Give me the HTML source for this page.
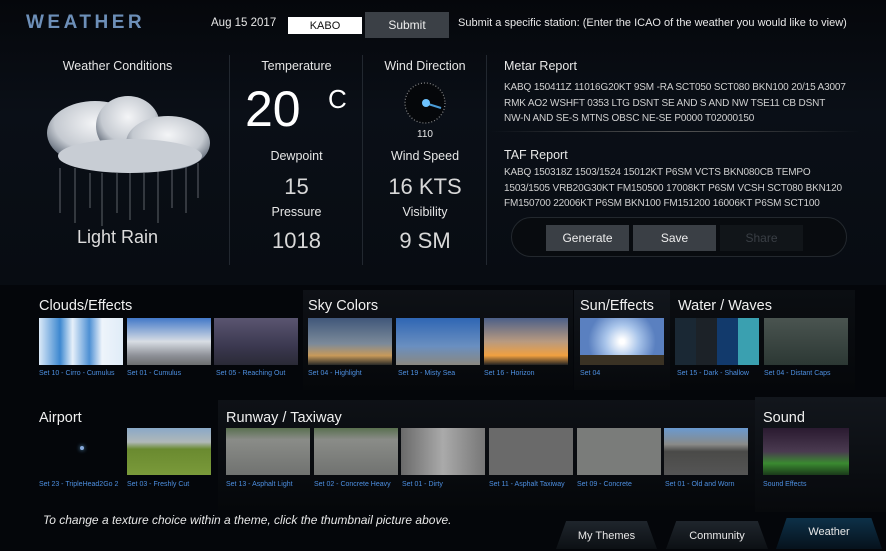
<!DOCTYPE html>
<html><head><meta charset="utf-8"><style>
*{margin:0;padding:0;box-sizing:border-box}
body{width:886px;height:547px;overflow:hidden;background:#04060a;font-family:"Liberation Sans",sans-serif;color:#e8e8e8;position:relative}
.a{position:absolute}
.top{left:0;top:0;width:886px;height:285px;background:linear-gradient(180deg,#05070b 0%,#0a0f17 40%,#080c12 100%)}
.lbl{font-size:12.5px;color:#e6e6e6;text-align:center}
.big{font-size:22px;color:#d8d8d8;text-align:center}
.mono{font-size:10px;color:#d0d0d0;line-height:15.5px;letter-spacing:-0.15px}
.h{font-size:14.5px;color:#f0f0f0}
.t{height:47px;width:84px}
.c{font-size:7px;color:#4d8fe0;white-space:nowrap}
.btn{background:#3a3f45;color:#eee;font-size:12px;text-align:center;line-height:26px;height:26px}
.tab{height:28px;color:#e8e8e8;font-size:11px;text-align:center;line-height:30px;background:linear-gradient(#1f252c,#0c1014);clip-path:polygon(10% 0,90% 0,100% 100%,0 100%)}
</style></head><body>
<div class="a top"></div>
<div class="a" style="left:26px;top:12px;font-size:19px;letter-spacing:3.5px;color:#6d8fb8;font-weight:bold">WEATHER</div>
<div class="a" style="left:211px;top:17px;font-size:11.5px">Aug 15 2017</div>
<div class="a" style="left:288px;top:17px;width:74px;height:17px;background:#fff;color:#111;font-size:11px;text-align:center;line-height:18px">KABO</div>
<div class="a btn" style="left:365px;top:12px;width:84px;height:26px;background:#3b4046">Submit</div>
<div class="a" style="left:458px;top:17px;font-size:11px">Submit a specific station: (Enter the ICAO of the weather you would like to view)</div>

<div class="a lbl" style="left:40px;top:59px;width:155px">Weather Conditions</div>
<svg class="a" style="left:40px;top:88px" width="175" height="140">
<defs><radialGradient id="g" cx="50%" cy="35%" r="60%"><stop offset="0" stop-color="#f4f5f7"/><stop offset="0.7" stop-color="#c4c9d0"/><stop offset="1" stop-color="#6a7380"/></radialGradient></defs>
<g stroke="#8a8f96" stroke-width="1.2" opacity=".55">
<line x1="20" y1="80" x2="20" y2="125"/><line x1="35" y1="80" x2="35" y2="135"/><line x1="50" y1="85" x2="50" y2="120"/><line x1="62" y1="85" x2="62" y2="138"/><line x1="77" y1="85" x2="77" y2="125"/><line x1="90" y1="85" x2="90" y2="132"/><line x1="104" y1="85" x2="104" y2="122"/><line x1="118" y1="80" x2="118" y2="135"/><line x1="132" y1="80" x2="132" y2="120"/><line x1="146" y1="75" x2="146" y2="125"/><line x1="158" y1="75" x2="158" y2="110"/></g>
<ellipse cx="55" cy="45" rx="48" ry="32" fill="url(#g)"/><ellipse cx="88" cy="38" rx="32" ry="30" fill="url(#g)"/><ellipse cx="128" cy="55" rx="42" ry="27" fill="url(#g)"/><ellipse cx="90" cy="68" rx="72" ry="17" fill="#c8cdd4"/>
</svg>
<div class="a" style="left:40px;top:227px;width:155px;font-size:18px;text-align:center;color:#ddd">Light Rain</div>

<div class="a" style="left:229px;top:55px;width:1px;height:210px;background:#222830"></div>
<div class="a" style="left:362px;top:55px;width:1px;height:210px;background:#222830"></div>
<div class="a" style="left:486px;top:55px;width:1px;height:210px;background:#222830"></div>

<div class="a lbl" style="left:230px;top:59px;width:133px">Temperature</div>
<div class="a" style="left:245px;top:80px;font-size:50px;color:#fff">20</div>
<div class="a" style="left:328px;top:84px;font-size:26px;color:#fff">C</div>
<div class="a lbl" style="left:230px;top:149px;width:133px">Dewpoint</div>
<div class="a big" style="left:230px;top:174px;width:133px">15</div>
<div class="a lbl" style="left:230px;top:205px;width:133px">Pressure</div>
<div class="a big" style="left:230px;top:228px;width:133px">1018</div>

<div class="a lbl" style="left:363px;top:59px;width:124px">Wind Direction</div>
<svg class="a" style="left:403px;top:81px" width="44" height="44"><circle cx="22" cy="22" r="20" fill="#05070a" stroke="#888" stroke-width="1.2" stroke-dasharray="1 2"/><line x1="22" y1="22" x2="38" y2="27" stroke="#4a9cd8" stroke-width="2"/><circle cx="23" cy="22" r="4" fill="#6ec3ff"/></svg>
<div class="a" style="left:363px;top:129px;width:124px;text-align:center;font-size:10px">110</div>
<div class="a lbl" style="left:363px;top:149px;width:124px">Wind Speed</div>
<div class="a big" style="left:363px;top:174px;width:124px">16 KTS</div>
<div class="a lbl" style="left:363px;top:205px;width:124px">Visibility</div>
<div class="a big" style="left:363px;top:228px;width:124px">9 SM</div>

<div class="a" style="left:504px;top:59px;font-size:12.5px">Metar Report</div>
<div class="a mono" style="left:504px;top:80px;width:360px">KABQ 150411Z 11016G20KT 9SM -RA SCT050 SCT080 BKN100 20/15 A3007<br>RMK AO2 WSHFT 0353 LTG DSNT SE AND S AND NW TSE11 CB DSNT<br>NW-N AND SE-S MTNS OBSC NE-SE P0000 T02000150</div>
<div class="a" style="left:490px;top:131px;width:370px;height:1px;background:linear-gradient(90deg,transparent,#555,transparent)"></div>
<div class="a" style="left:504px;top:148px;font-size:12.5px">TAF Report</div>
<div class="a mono" style="left:504px;top:165px;width:360px">KABQ 150318Z 1503/1524 15012KT P6SM VCTS BKN080CB TEMPO<br>1503/1505 VRB20G30KT FM150500 17008KT P6SM VCSH SCT080 BKN120<br>FM150700 22006KT P6SM BKN100 FM151200 16006KT P6SM SCT100</div>
<div class="a" style="left:511px;top:217px;width:336px;height:40px;border-radius:20px;background:#080b0f;border:1px solid #23282e"></div>
<div class="a btn" style="left:546px;top:225px;width:83px">Generate</div>
<div class="a btn" style="left:633px;top:225px;width:83px">Save</div>
<div class="a btn" style="left:720px;top:225px;width:83px;background:#111519;color:#3a3f45">Share</div>

<div class="a" style="left:303px;top:290px;width:270px;height:100px;background:linear-gradient(#0e1116,#05070a)"></div>
<div class="a" style="left:574px;top:290px;width:96px;height:100px;background:linear-gradient(#12161c,#07090c)"></div>
<div class="a" style="left:670px;top:290px;width:185px;height:100px;background:linear-gradient(#0b0e12,#05070a)"></div>
<div class="a" style="left:218px;top:400px;width:540px;height:110px;background:linear-gradient(#0e1116,#05070a)"></div>
<div class="a" style="left:755px;top:397px;width:131px;height:115px;background:linear-gradient(#12161c,#07090c)"></div>

<div class="a h" style="left:39px;top:298px">Clouds/Effects</div>
<div class="a h" style="left:308px;top:298px">Sky Colors</div>
<div class="a h" style="left:580px;top:298px">Sun/Effects</div>
<div class="a h" style="left:678px;top:298px">Water / Waves</div>
<div class="a h" style="left:39px;top:410px">Airport</div>
<div class="a h" style="left:226px;top:410px">Runway / Taxiway</div>
<div class="a h" style="left:763px;top:410px">Sound</div>

<div class="a t" style="left:39px;top:318px;background:linear-gradient(90deg,#dbe9f8,#3d88d0 25%,#e6f0fa 40%,#4d90d4 60%,#eef4fb 75%,#e0ecf8)"></div>
<div class="a t" style="left:127px;top:318px;background:linear-gradient(#4278c8,#d8dde4 50%,#8d9097 80%,#6c6e70)"></div>
<div class="a t" style="left:214px;top:318px;background:linear-gradient(#5a5570,#3b3850 60%,#2a2a36)"></div>
<div class="a t" style="left:308px;top:318px;background:linear-gradient(#40577a,#7c8a9a 55%,#c89a5a 80%,#2a2a28)"></div>
<div class="a t" style="left:396px;top:318px;background:linear-gradient(#2f66b4,#6a8fc0 60%,#8a8880)"></div>
<div class="a t" style="left:484px;top:318px;background:linear-gradient(#4b5f88,#b89a80 50%,#f0a040 80%,#222)"></div>
<div class="a t" style="left:580px;top:318px;background:radial-gradient(circle at 50% 50%,#fff 5%,#a8c4ea 35%,#5a80c0 70%),#5a80c0"></div>
<div class="a" style="left:580px;top:355px;width:84px;height:10px;background:#3a3224"></div>
<div class="a t" style="left:675px;top:318px;background:linear-gradient(90deg,#1a2834 25%,#1c2228 25% 50%,#123a6c 50% 75%,#3aa0b0 75%)"></div>
<div class="a t" style="left:764px;top:318px;background:linear-gradient(#4a5450,#2c3834)"></div>
<div class="a c" style="left:39px;top:370px">Set 10 - Cirro - Cumulus</div>
<div class="a c" style="left:127px;top:370px">Set 01 - Cumulus</div>
<div class="a c" style="left:216px;top:370px">Set 05 - Reaching Out</div>
<div class="a c" style="left:308px;top:370px">Set 04 - Highlight</div>
<div class="a c" style="left:398px;top:370px">Set 19 - Misty Sea</div>
<div class="a c" style="left:484px;top:370px">Set 16 - Horizon</div>
<div class="a c" style="left:580px;top:370px">Set 04</div>
<div class="a c" style="left:677px;top:370px">Set 15 - Dark - Shallow</div>
<div class="a c" style="left:764px;top:370px">Set 04 - Distant Caps</div>

<div class="a" style="left:80px;top:446px;width:4px;height:4px;border-radius:2px;background:#8ad;box-shadow:0 0 4px #6ad"></div>
<div class="a t" style="left:127px;top:428px;background:linear-gradient(#8aa8c8,#b0b8b8 30%,#6a8a30 45%,#7a9a3a)"></div>
<div class="a t" style="left:226px;top:428px;background:linear-gradient(#5a7050,#8a8c88 25%,#707270)"></div>
<div class="a t" style="left:314px;top:428px;background:linear-gradient(#5a7050,#8a8c88 25%,#707270)"></div>
<div class="a t" style="left:401px;top:428px;background:linear-gradient(90deg,#6a6a6a,#aaa 50%,#777)"></div>
<div class="a t" style="left:489px;top:428px;background:#6a6a6a"></div>
<div class="a t" style="left:577px;top:428px;background:#7a7c7a"></div>
<div class="a t" style="left:664px;top:428px;background:linear-gradient(#6a9ad0,#8a8a88 35%,#4a4a48 50%,#555)"></div>
<div class="a t" style="left:763px;top:428px;width:86px;background:linear-gradient(#2a1a30,#4a3a50 50%,#3a8a30 75%,#1a3a1a)"></div>
<div class="a c" style="left:39px;top:481px">Set 23 - TripleHead2Go 2</div>
<div class="a c" style="left:127px;top:481px">Set 03 - Freshly Cut</div>
<div class="a c" style="left:226px;top:481px">Set 13 - Asphalt Light</div>
<div class="a c" style="left:314px;top:481px">Set 02 - Concrete Heavy</div>
<div class="a c" style="left:402px;top:481px">Set 01 - Dirty</div>
<div class="a c" style="left:489px;top:481px">Set 11 - Asphalt Taxiway</div>
<div class="a c" style="left:577px;top:481px">Set 09 - Concrete</div>
<div class="a c" style="left:665px;top:481px">Set 01 - Old and Worn</div>
<div class="a c" style="left:763px;top:481px">Sound Effects</div>

<div class="a" style="left:43px;top:513px;font-size:12px;font-style:italic;color:#e8e8e8">To change a texture choice within a theme, click the thumbnail picture above.</div>
<div class="a tab" style="left:556px;top:521px;width:101px">My Themes</div>
<div class="a tab" style="left:666px;top:521px;width:102px">Community</div>
<div class="a tab" style="left:776px;top:518px;width:106px;height:31px;line-height:28px;background:linear-gradient(#0d3148,#06121c)">Weather</div>
</body></html>
